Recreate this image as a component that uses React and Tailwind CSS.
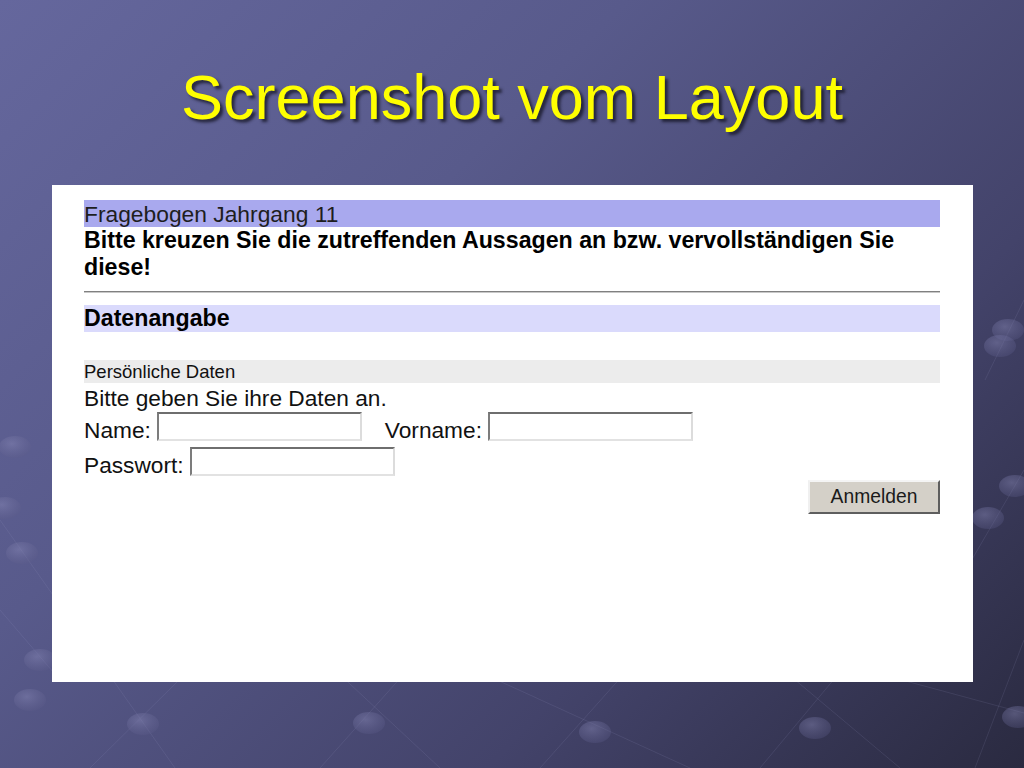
import React from "react";

const dots = [
  [143, 724], [369, 723], [595, 732], [815, 728], [1018, 717],
  [15, 447], [5, 508], [22, 553], [40, 660], [1008, 330], [1000, 346],
  [1015, 486], [988, 518], [30, 700],
];

const lines = [
  [0, 520, 175, 768], [90, 768, 260, 600], [320, 768, 470, 600],
  [260, 600, 440, 768], [497, 680, 690, 768], [540, 768, 690, 600],
  [760, 768, 900, 600], [700, 600, 900, 768], [902, 680, 1024, 713],
  [975, 768, 1024, 640], [960, 580, 1024, 470], [0, 610, 60, 680],
  [985, 380, 1024, 300],
];

const Backdrop = () => (
  <svg
    className="absolute inset-0 w-full h-full"
    viewBox="0 0 1024 768"
    preserveAspectRatio="none"
  >
    <defs>
      <radialGradient id="dot" cx="40%" cy="35%" r="70%">
        <stop offset="0%" stopColor="#8a8ab8" stopOpacity="0.45" />
        <stop offset="100%" stopColor="#5a5a88" stopOpacity="0.3" />
      </radialGradient>
    </defs>
    {lines.map(([x1, y1, x2, y2], i) => (
      <line
        key={i}
        x1={x1}
        y1={y1}
        x2={x2}
        y2={y2}
        stroke="#9a9ac8"
        strokeOpacity="0.14"
        strokeWidth="1"
      />
    ))}
    {dots.map(([cx, cy], i) => (
      <ellipse key={i} cx={cx} cy={cy} rx="16" ry="11" fill="url(#dot)" />
    ))}
  </svg>
);

const inputCls =
  "w-[205px] h-[29px] bg-white border-2 border-t-[#6e6e6e] border-l-[#7c7c7c] border-r-[#dcdcdc] border-b-[#e2e2e2] outline-none";

export default function App() {
  return (
    <div className="relative w-full h-[768px] overflow-hidden bg-[linear-gradient(135deg,#65679d_0%,#585a8b_35%,#43436a_70%,#2a2a40_100%)] font-['Liberation_Sans',Arial,sans-serif]">
      <Backdrop />

      <div className="relative flex flex-col">
        <h1 className="pt-[66px] text-center text-[63px] leading-[63px] text-[#ffff00] [text-shadow:3px_3px_3px_rgba(20,20,35,0.75)]">
          Screenshot vom Layout
        </h1>

        <div className="mt-[56px] ml-[52px] w-[921px] h-[497px] bg-white pt-[15px] pl-[32px] pr-[33px]">
          <div className="h-[27px] bg-[#a9a9ee] text-[22.8px] leading-[28px] text-[#1e1e1e]">
            Fragebogen Jahrgang 11
          </div>
          <p className="text-[23.2px] leading-[27px] font-bold text-black">
            Bitte kreuzen Sie die zutreffenden Aussagen an bzw. vervollständigen Sie
            <br />
            diese!
          </p>

          <div className="mt-[10px] h-[2px] border-t border-t-[#808080] border-b border-b-[#c8c8c8]" />

          <div className="mt-[12px] h-[27px] bg-[#dadafc] text-[23.2px] leading-[27px] font-bold text-black">
            Datenangabe
          </div>

          <div className="mt-[28px] h-[23px] bg-[#ececec] text-[18.5px] leading-[23px] text-[#111]">
            Persönliche Daten
          </div>

          <div className="pt-[2px] text-[22.7px] leading-[27px] text-[#111]">
            Bitte geben Sie ihre Daten an.
          </div>

          <div className="flex items-end text-[22.7px] leading-[22px] text-[#111]">
            <span>Name:</span>
            <input className={`ml-[6px] ${inputCls}`} />
            <span className="ml-[23px]">Vorname:</span>
            <input className={`ml-[6px] ${inputCls}`} />
          </div>

          <div className="mt-[6px] flex items-end text-[22.7px] leading-[22px] text-[#111]">
            <span>Passwort:</span>
            <input type="password" className={`ml-[6px] ${inputCls}`} />
          </div>

          <div className="mt-[4px] flex justify-end">
            <button className="w-[132px] h-[34px] bg-[#d4d0c8] border-2 border-t-[#f4f4f4] border-l-[#f0f0f0] border-r-[#5e5e5e] border-b-[#5e5e5e] text-[19.3px] text-[#1a1a1a]">
              Anmelden
            </button>
          </div>
        </div>
      </div>
    </div>
  );
}
